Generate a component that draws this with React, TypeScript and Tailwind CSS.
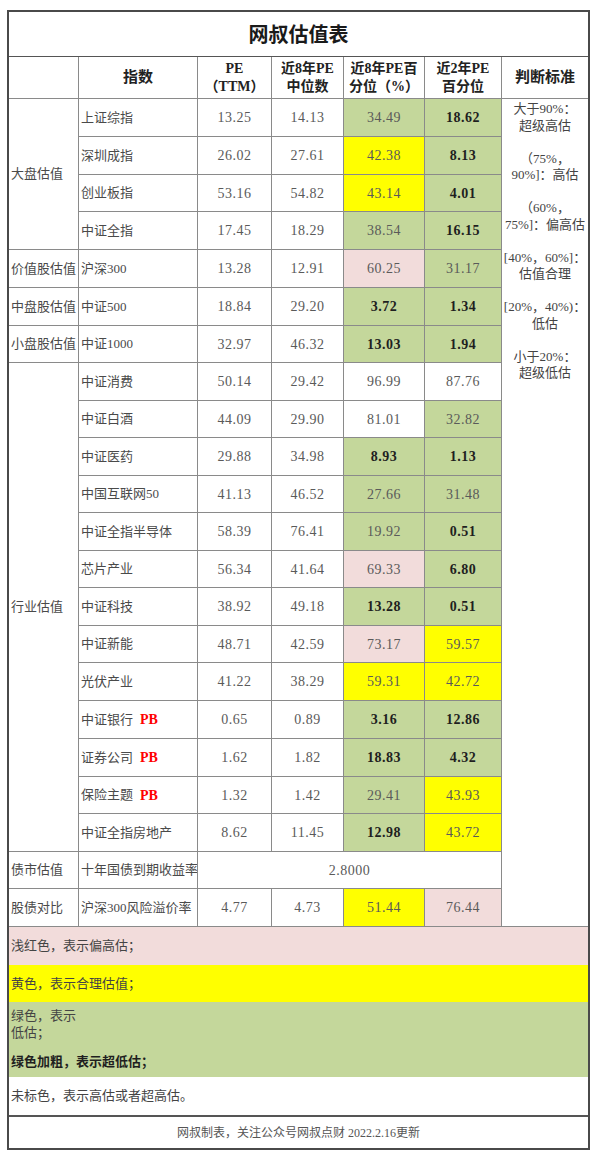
import React from "react";

type Cell = { v: string; bg?: "g" | "y" | "p"; b?: boolean };
type Row = { name: string; pb?: boolean; pe: string; med: string; e: Cell; f: Cell };

const bgClass = { g: "bg-[#c4d79b]", y: "bg-[#ffff00]", p: "bg-[#f2dcdb]" };

const groups: { title: string; span: string; rows: Row[] }[] = [
  {
    title: "大盘估值",
    span: "row-span-4",
    rows: [
      { name: "上证综指", pe: "13.25", med: "14.13", e: { v: "34.49", bg: "g" }, f: { v: "18.62", bg: "g", b: true } },
      { name: "深圳成指", pe: "26.02", med: "27.61", e: { v: "42.38", bg: "y" }, f: { v: "8.13", bg: "g", b: true } },
      { name: "创业板指", pe: "53.16", med: "54.82", e: { v: "43.14", bg: "y" }, f: { v: "4.01", bg: "g", b: true } },
      { name: "中证全指", pe: "17.45", med: "18.29", e: { v: "38.54", bg: "g" }, f: { v: "16.15", bg: "g", b: true } },
    ],
  },
  {
    title: "价值股估值",
    span: "row-span-1",
    rows: [{ name: "沪深300", pe: "13.28", med: "12.91", e: { v: "60.25", bg: "p" }, f: { v: "31.17", bg: "g" } }],
  },
  {
    title: "中盘股估值",
    span: "row-span-1",
    rows: [{ name: "中证500", pe: "18.84", med: "29.20", e: { v: "3.72", bg: "g", b: true }, f: { v: "1.34", bg: "g", b: true } }],
  },
  {
    title: "小盘股估值",
    span: "row-span-1",
    rows: [{ name: "中证1000", pe: "32.97", med: "46.32", e: { v: "13.03", bg: "g", b: true }, f: { v: "1.94", bg: "g", b: true } }],
  },
  {
    title: "行业估值",
    span: "row-span-13",
    rows: [
      { name: "中证消费", pe: "50.14", med: "29.42", e: { v: "96.99" }, f: { v: "87.76" } },
      { name: "中证白酒", pe: "44.09", med: "29.90", e: { v: "81.01" }, f: { v: "32.82", bg: "g" } },
      { name: "中证医药", pe: "29.88", med: "34.98", e: { v: "8.93", bg: "g", b: true }, f: { v: "1.13", bg: "g", b: true } },
      { name: "中国互联网50", pe: "41.13", med: "46.52", e: { v: "27.66", bg: "g" }, f: { v: "31.48", bg: "g" } },
      { name: "中证全指半导体", pe: "58.39", med: "76.41", e: { v: "19.92", bg: "g" }, f: { v: "0.51", bg: "g", b: true } },
      { name: "芯片产业", pe: "56.34", med: "41.64", e: { v: "69.33", bg: "p" }, f: { v: "6.80", bg: "g", b: true } },
      { name: "中证科技", pe: "38.92", med: "49.18", e: { v: "13.28", bg: "g", b: true }, f: { v: "0.51", bg: "g", b: true } },
      { name: "中证新能", pe: "48.71", med: "42.59", e: { v: "73.17", bg: "p" }, f: { v: "59.57", bg: "y" } },
      { name: "光伏产业", pe: "41.22", med: "38.29", e: { v: "59.31", bg: "y" }, f: { v: "42.72", bg: "y" } },
      { name: "中证银行", pb: true, pe: "0.65", med: "0.89", e: { v: "3.16", bg: "g", b: true }, f: { v: "12.86", bg: "g", b: true } },
      { name: "证券公司", pb: true, pe: "1.62", med: "1.82", e: { v: "18.83", bg: "g", b: true }, f: { v: "4.32", bg: "g", b: true } },
      { name: "保险主题", pb: true, pe: "1.32", med: "1.42", e: { v: "29.41", bg: "g" }, f: { v: "43.93", bg: "y" } },
      { name: "中证全指房地产", pe: "8.62", med: "11.45", e: { v: "12.98", bg: "g", b: true }, f: { v: "43.72", bg: "y" } },
    ],
  },
];

const criteria = [
  ["大于90%：", "超级高估"],
  ["（75%，", "90%]：高估"],
  ["（60%，", "75%]：偏高估"],
  ["[40%，60%]：", "估值合理"],
  ["[20%，40%)：", "低估"],
  ["小于20%：", "超级低估"],
];

const serif = "font-['Liberation_Serif','Noto_Sans_CJK_SC',serif]";

const Num = ({ c }: { c: Cell }) => (
  <div
    className={`flex items-center justify-center text-[14px] tracking-[0.5px] ${c.bg ? bgClass[c.bg] : "bg-white"} ${
      c.b ? "font-bold text-[#1f1f1f]" : "text-[#5a5a5a]"
    }`}
  >
    {c.v}
  </div>
);

const Plain = ({ v }: { v: string }) => (
  <div className="flex items-center justify-center bg-white text-[14px] tracking-[0.5px] text-[#5a5a5a]">{v}</div>
);

const Label = ({ name, pb }: { name: string; pb?: boolean }) => (
  <div className="flex items-center overflow-hidden whitespace-nowrap bg-white pl-[2px] text-[13px] text-[#4a4a4a]">
    <span>{name}</span>
    {pb && <span className="ml-[7px] text-[14px] font-bold text-[#ff0000]">PB</span>}
  </div>
);

const Category = ({ title, span }: { title: string; span: string }) => (
  <div className={`flex items-center whitespace-nowrap bg-white pl-[2px] text-[13px] text-[#4a4a4a] ${span}`}>{title}</div>
);

export default function App() {
  return (
    <div className={`min-h-[1160px] bg-white pt-[10px] ${serif}`}>
      <div className="ml-[7px] w-[583px] border-2 border-[#4a4a4a]">
        <div className="flex h-[45px] items-center justify-center border-b border-[#555] font-['Noto_Sans_CJK_SC',sans-serif] text-[20px] font-bold text-[#1a1a1a]">
          网叔估值表
        </div>

        <div className="grid grid-cols-[69px_118px_73px_71px_80px_76px_86px] grid-rows-[41px_37px_37px_36px_37px_37px_37px_36px_37px_36px_37px_36px_37px_36px_37px_36px_37px_37px_37px_36px_37px_36px_37px] gap-px bg-[#8a8a8a]">
          <div className="bg-white" />
          <div className="flex items-center justify-center bg-white text-[15px] font-bold text-[#222]">指数</div>
          <div className="flex flex-col items-center justify-center bg-white text-[14px] leading-[18px] font-bold text-[#222]">
            <span>PE</span>
            <span>（TTM）</span>
          </div>
          <div className="flex flex-col items-center justify-center bg-white text-[14px] leading-[18px] font-bold text-[#222]">
            <span>近8年PE</span>
            <span>中位数</span>
          </div>
          <div className="flex flex-col items-center justify-center bg-white text-[14px] leading-[18px] font-bold text-[#222]">
            <span>近8年PE百</span>
            <span>分位（%）</span>
          </div>
          <div className="flex flex-col items-center justify-center bg-white text-[14px] leading-[18px] font-bold text-[#222]">
            <span>近2年PE</span>
            <span>百分位</span>
          </div>
          <div className="flex items-center justify-center bg-white text-[15px] font-bold text-[#222]">判断标准</div>

          {groups.map((g, gi) =>
            g.rows.map((r, ri) => (
              <React.Fragment key={r.name}>
                {ri === 0 && <Category title={g.title} span={g.span} />}
                <Label name={r.name} pb={r.pb} />
                <Plain v={r.pe} />
                <Plain v={r.med} />
                <Num c={r.e} />
                <Num c={r.f} />
                {gi === 0 && ri === 0 && (
                  <div className="row-span-22 flex flex-col items-center bg-white pt-[2px] text-[13px] leading-[16.5px] text-[#444]">
                    {criteria.map((c, i) => (
                      <div key={i} className={`flex flex-col items-center ${i > 0 ? "mt-[16.5px]" : ""}`}>
                        <span>{c[0]}</span>
                        <span>{c[1]}</span>
                      </div>
                    ))}
                  </div>
                )}
              </React.Fragment>
            ))
          )}

          <Category title="债市估值" span="row-span-1" />
          <Label name="十年国债到期收益率" />
          <div className="col-span-4 flex items-center justify-center bg-white text-[14px] tracking-[0.5px] text-[#5a5a5a]">
            2.8000
          </div>

          <Category title="股债对比" span="row-span-1" />
          <Label name="沪深300风险溢价率" />
          <Plain v="4.77" />
          <Plain v="4.73" />
          <Num c={{ v: "51.44", bg: "y" }} />
          <Num c={{ v: "76.44", bg: "p" }} />
        </div>

        <div className="border-t border-[#8a8a8a] text-[13px] text-[#444]">
          <div className="flex h-[38px] items-center bg-[#f2dcdb] pl-[2px]">浅红色，表示偏高估；</div>
          <div className="flex h-[37px] items-center bg-[#ffff00] pl-[2px]">黄色，表示合理估值；</div>
          <div className="flex h-[75px] flex-col bg-[#c4d79b] pt-[5px] pl-[2px] leading-[17px]">
            <span>绿色，表示</span>
            <span>低估；</span>
            <span className="mt-[12px] font-bold text-[#1f1f1f]">绿色加粗，表示超低估；</span>
          </div>
          <div className="flex h-[38px] items-center bg-white pl-[2px]">未标色，表示高估或者超高估。</div>
        </div>

        <div className="flex h-[33px] items-center justify-center border-t-2 border-[#555] text-[12px] text-[#555]">
          网叔制表，关注公众号网叔点财 2022.2.16更新
        </div>
      </div>
    </div>
  );
}
